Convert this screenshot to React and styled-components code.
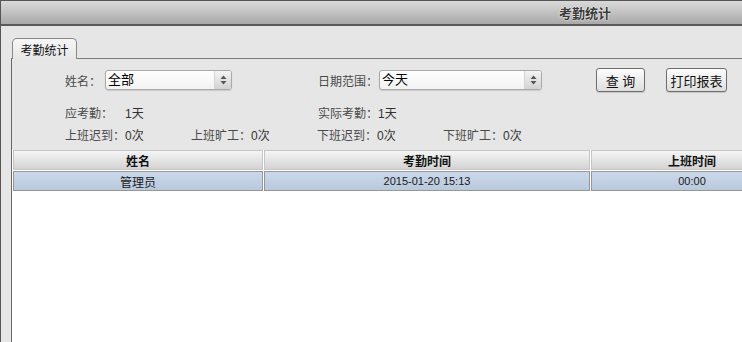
import { styled, createGlobalStyle } from "styled-components";

const Global = createGlobalStyle`
    html, body {
        margin: 0;
        padding: 0;
        background: #e6e6e6;
        font-family: "Liberation Sans", "Noto Sans CJK SC", sans-serif;
        font-size: 12px;
        color: #333;
    }
`

const stats = [
    [{ label: '应考勤', value: '1天' }, { label: '实际考勤', value: '1天' }],
    [
        { label: '上班迟到', value: '0次' },
        { label: '上班旷工', value: '0次' },
        { label: '下班迟到', value: '0次' },
        { label: '下班旷工', value: '0次' },
    ],
]

const columns = [
    { title: '姓名', width: 250 },
    { title: '考勤时间', width: 326 },
    { title: '上班时间', width: 202 },
]

const rows = [['管理员', '2015-01-20 15:13', '00:00']]

const Arrows = () => (
    <svg width="7" height="10" viewBox="0 0 7 10">
        <path d="M3.5 0.5 L6.5 4 L0.5 4 Z" fill="#555" />
        <path d="M3.5 9.5 L6.5 6 L0.5 6 Z" fill="#555" />
    </svg>
)

const Select = ({ value, width }) => (
    <CsSelect $width={width}>
        <span className="value">{value}</span>
        <span className="arrow"><Arrows /></span>
    </CsSelect>
)

const App = () => {
    return (
        <Window>
            <Global />
            <TitleBar>
                <span>考勤统计</span>
            </TitleBar>
            <Body>
                <TabStrip>
                    <Tab>考勤统计</Tab>
                </TabStrip>
                <Panel>
                    <Form>
                        <FilterRow>
                            <Field $width={253}>
                                <Label $width={40}>姓名：</Label>
                                <Select value="全部" width={127} />
                            </Field>
                            <Field>
                                <Label $width={61}>日期范围：</Label>
                                <Select value="今天" width={163} />
                            </Field>
                            <Button $left={54} $width={49}>查 询</Button>
                            <Button $left={21} $width={61}>打印报表</Button>
                        </FilterRow>
                        {stats.map((line, i) => (
                            <StatRow key={i} $first={i === 0}>
                                {line.map(s => (
                                    <Stat key={s.label} $width={line.length === 2 ? 253 : 126}>
                                        <span className="label">{s.label}：</span>
                                        <span className="value">{s.value}</span>
                                    </Stat>
                                ))}
                            </StatRow>
                        ))}
                    </Form>
                    <Grid>
                        <Table>
                            <thead>
                                <tr>
                                    {columns.map(c => (
                                        <th key={c.title} style={{ width: c.width }}>{c.title}</th>
                                    ))}
                                </tr>
                            </thead>
                            <tbody>
                                {rows.map((r, i) => (
                                    <tr key={i}>
                                        {r.map((cell, j) => <td key={j}>{cell}</td>)}
                                    </tr>
                                ))}
                            </tbody>
                        </Table>
                    </Grid>
                </Panel>
            </Body>
        </Window>
    );
}

export default App;

const Window = styled.div`
    width: 742px;
    height: 342px;
    overflow: hidden;
    display: flex;
    flex-direction: column;
    box-sizing: border-box;
    border-left: 1px solid #555;
    background: #e6e6e6;
`

const TitleBar = styled.div`
    height: 26px;
    flex-shrink: 0;
    box-sizing: border-box;
    border-top: 1px solid #555;
    border-bottom: 2px solid #5a5a5a;
    margin-left: -1px;
    background: linear-gradient(#dadada, #a9a9a9);
    display: flex;
    align-items: center;

    span{
        margin-left: 559px;
        font-family: "Noto Sans CJK SC", sans-serif;
        font-weight: bold;
        font-size: 13px;
        color: #3a3a3a;
        text-shadow: 0 0 2px #fff, 0 0 1px #fff;
    }
`

const Body = styled.div`
    flex: 1;
    display: flex;
    flex-direction: column;
    padding: 11px 0 0 10px;
    min-height: 0;
`

const TabStrip = styled.div`
    height: 21px;
    flex-shrink: 0;
    border-bottom: 1px solid #7a7a7a;
    display: flex;
    align-items: flex-end;
`

const Tab = styled.div`
    height: 21px;
    width: 65px;
    box-sizing: border-box;
    margin-left: 1px;
    margin-bottom: -1px;
    border: 1px solid #888;
    border-bottom: none;
    border-radius: 5px 5px 0 0;
    background: linear-gradient(#f7f7f7, #e6e6e6);
    font-family: "Noto Sans CJK SC", sans-serif;
    font-size: 12px;
    color: #111;
    display: flex;
    align-items: center;
    justify-content: center;
`

const Panel = styled.div`
    flex: 1;
    display: flex;
    flex-direction: column;
    border-left: 1px solid #6a6a6a;
    min-height: 0;
`

const Form = styled.div`
    padding: 9px 0 5px 53px;
`

const FilterRow = styled.div`
    display: flex;
    align-items: center;
    height: 24px;
`

const Field = styled.div`
    display: flex;
    align-items: center;
    width: ${p => p.$width ? p.$width + 'px' : 'auto'};
`

const Label = styled.span`
    width: ${p => p.$width}px;
    color: #4a4a4a;
    white-space: nowrap;
`

const CsSelect = styled.div`
    width: ${p => p.$width}px;
    height: 20px;
    box-sizing: border-box;
    border: 1px solid #a9a9a9;
    border-radius: 3px;
    background: linear-gradient(#ffffff, #f2f2f2);
    box-shadow: 0 1px 1px rgba(0, 0, 0, 0.12);
    display: flex;
    overflow: hidden;

    .value{
        flex: 1;
        padding-left: 2px;
        line-height: 18px;
        font-size: 13px;
        color: #000;
    }
    .arrow{
        width: 16px;
        border-left: 1px solid #d4d4d4;
        background: linear-gradient(#f4f4f4, #d2d2d2);
        display: flex;
        align-items: center;
        justify-content: center;
    }
`

const Button = styled.div`
    margin-left: ${p => p.$left}px;
    width: ${p => p.$width}px;
    height: 24px;
    box-sizing: border-box;
    border: 1px solid #6e6e6e;
    border-radius: 3px;
    background: linear-gradient(#fdfdfd, #dedede);
    box-shadow: 0 1px 1px rgba(0, 0, 0, 0.15);
    display: flex;
    align-items: center;
    justify-content: center;
    font-size: 13px;
    color: #111;
    white-space: pre;
`

const StatRow = styled.div`
    display: flex;
    height: 22px;
    align-items: center;
    margin-top: ${p => p.$first ? '9px' : '0'};
`

const Stat = styled.div`
    width: ${p => p.$width}px;
    display: flex;

    .label{
        width: 60px;
        flex-shrink: 0;
        color: #4a4a4a;
        white-space: nowrap;
    }
    .value{
        color: #333;
    }
`

const Grid = styled.div`
    flex: 1;
    background: #fff;
    overflow: hidden;
`

const Table = styled.table`
    border-collapse: separate;
    border-spacing: 1px;
    table-layout: fixed;
    width: 782px;
    margin-top: -1px;
    font-size: 11px;

    th, td{
        padding: 0;
        text-align: center;
        box-sizing: border-box;
        white-space: nowrap;
    }
    th{
        height: 20px;
        border: 1px solid #c6c6c6;
        background: linear-gradient(#f5f5f5, #d3d3d3);
        font-family: "Noto Sans CJK SC", sans-serif;
        font-size: 12px;
        font-weight: bold;
        color: #111;
    }
    td{
        height: 20px;
        border: 1px solid #979797;
        background: linear-gradient(#cad8ea, #b9c9dc);
        color: #1a1a1a;
    }
    td:first-child{
        font-size: 12px;
    }
`
